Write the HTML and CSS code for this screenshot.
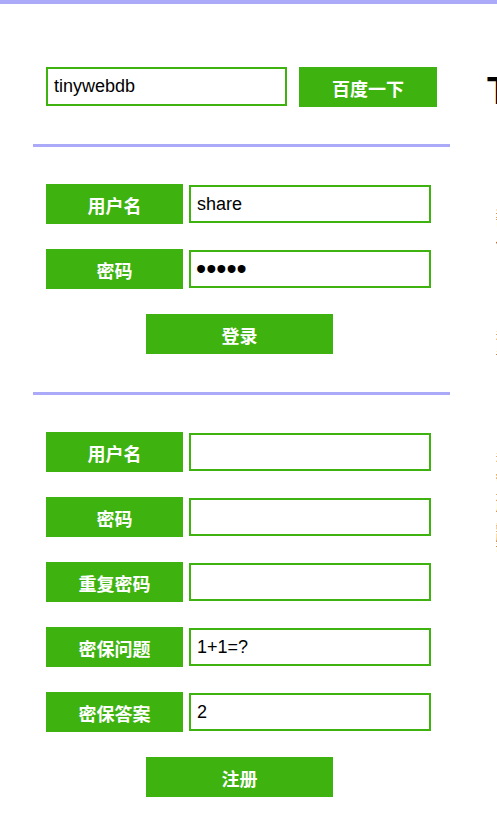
FILE: index.html
```html
<!DOCTYPE html>
<html lang="zh-CN">
<head>
  <meta charset="UTF-8" />
  <meta name="viewport" content="width=device-width, initial-scale=1.0"/>
  <title>TinyWebDB 管理</title>
  <link rel="stylesheet" href="styles.css">
</head>
<body>
  <div class="topbar"></div>

  <div class="page">
    <div class="left">
      <!-- search -->
      <form class="search">
        <input type="text" class="field search-field" value="tinywebdb" />
        <button type="button" class="btn search-btn">百度一下</button>
      </form>

      <hr class="divider">

      <!-- login -->
      <form class="panel" id="loginForm">
        <div class="row">
          <span class="tag">用户名</span>
          <input type="text" class="field" value="share" />
        </div>
        <div class="row">
          <span class="tag">密码</span>
          <input type="password" class="field secret" value="share" />
        </div>
        <button type="submit" class="btn submit">登录</button>
      </form>

      <hr class="divider">

      <!-- register -->
      <form class="panel" id="signupForm">
        <div class="row">
          <span class="tag">用户名</span>
          <input type="text" class="field" />
        </div>
        <div class="row">
          <span class="tag">密码</span>
          <input type="password" class="field" />
        </div>
        <div class="row">
          <span class="tag">重复密码</span>
          <input type="password" class="field" />
        </div>
        <div class="row">
          <span class="tag">密保问题</span>
          <input type="text" class="field" value="1+1=?" />
        </div>
        <div class="row">
          <span class="tag">密保答案</span>
          <input type="text" class="field" value="2" />
        </div>
        <button type="submit" class="btn submit">注册</button>
      </form>
    </div>

    <div class="right">
      <h1>TinyWebDB</h1>
      <p class="p1">这是一个简单的在线数据库服务，<br>可以用来保存和读取数据。<br><br>使用前请先登录账号。</p>
      <p class="p2">没有账号的话，<br><br>请在左边注册一个新的账号。</p>
      <p class="p3">注意：<br><br>密码请妥善保管，<br><br>忘记密码时可以<br>用密保问题找回。<br><br>数据只保存在<br>服务器上。<br>谢谢使用。</p>
    </div>
  </div>

  <script>
    document.querySelectorAll("form").forEach(function (f) {
      f.addEventListener("submit", function (e) {
        e.preventDefault();
      });
    });
  </script>
</body>
</html>
```

FILE: styles.css
```css
* { box-sizing: border-box; }

body {
  margin: 0;
  font-family: "Liberation Sans", "Noto Sans CJK SC", sans-serif;
  background: #fff;
  color: #000;
  overflow: hidden;
}

.topbar {
  height: 4px;
  background-color: #aaaaf8;
}

.page {
  display: flex;
  width: max-content;
}

.left {
  width: 417px;
  margin-left: 33px;
  margin-right: 37px;
}

.search {
  display: flex;
  align-items: flex-start;
  gap: 12px;
  padding: 63px 13px 37px;
}

.divider {
  height: 3px;
  margin: 0;
  border: none;
  background-color: #aaaaf8;
}

.panel {
  display: flex;
  flex-direction: column;
  gap: 25px;
  padding: 37px 13px 38px;
}

.row {
  display: flex;
  align-items: center;
  gap: 6px;
}

.tag,
.btn {
  display: flex;
  justify-content: center;
  align-items: center;
  height: 40px;
  background-color: #3eb30f;
  color: #fff;
  font-family: "Noto Sans CJK SC", sans-serif;
  font-weight: bold;
  font-size: 18px;
}

.tag {
  width: 137px;
  padding-top: 2px;
}

.btn {
  border: none;
  padding: 2px 0 0;
  cursor: pointer;
}

.search-btn { width: 138px; }

.submit {
  align-self: flex-start;
  width: 187px;
  margin-left: 100px;
}

.field {
  width: 242px;
  height: 38px;
  padding: 0 6px;
  border: 2px solid #3eb30f;
  font-family: "Liberation Sans", sans-serif;
  font-size: 18px;
  color: #000;
  outline: none;
}

.secret {
  font-size: 29px;
  padding-left: 5px;
}

.search-field {
  width: 241px;
  height: 39px;
}

.right h1 {
  margin: 67px 0 0;
  font-size: 38px;
  line-height: 40px;
  font-weight: bold;
}

.right p {
  margin: 0;
  padding-left: 9px;
  font-size: 9px;
  line-height: 10px;
}

.p1 { margin-top: 98px !important; }
.p2 { margin-top: 82px !important; }
.p3 { margin-top: 92px !important; }
```
